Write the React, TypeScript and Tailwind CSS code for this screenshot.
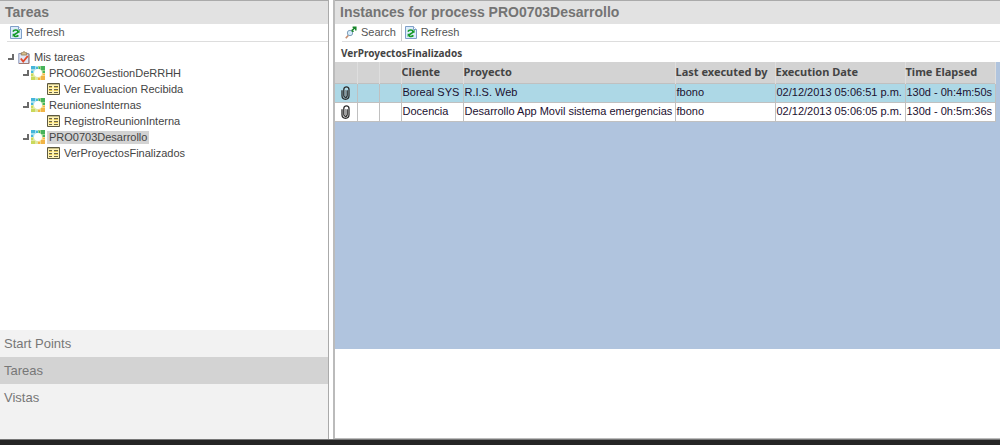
import type { ReactNode } from 'react'
import clsx from 'clsx'

interface Task {
  process: string
  view?: string
  selected?: boolean
}

const tasks: Task[] = [
  { process: 'PRO0602GestionDeRRHH', view: 'Ver Evaluacion Recibida' },
  { process: 'ReunionesInternas', view: 'RegistroReunionInterna' },
  { process: 'PRO0703Desarrollo', view: 'VerProyectosFinalizados', selected: true },
]

const instances = [
  ['Boreal SYS', 'R.I.S. Web', 'fbono', '02/12/2013 05:06:51 p.m.', '130d - 0h:4m:50s'],
  ['Docencia', 'Desarrollo App Movil sistema emergencias', 'fbono', '02/12/2013 05:06:05 p.m.', '130d - 0h:5m:36s'],
]

const columns = [
  { label: '', width: 'w-[22px]' },
  { label: '', width: 'w-[22px]' },
  { label: '', width: 'w-[22px]' },
  { label: 'Cliente', width: 'w-[62px]' },
  { label: 'Proyecto', width: 'w-[212px]' },
  { label: 'Last executed by', width: 'w-[100px]' },
  { label: 'Execution Date', width: 'w-[130px]' },
  { label: 'Time Elapsed', width: 'w-[90px]' },
]

function RefreshIcon() {
  return (
    <svg className="h-[13px] w-3 shrink-0" viewBox="0 0 12 13" fill="none">
      <path d="M.5.5h8l3 3v9H.5z" fill="#dcecfb" stroke="#7f9fc8" />
      <path d="M8.5.5v3h3" fill="#fff" stroke="#7f9fc8" />
      <path d="M3 5.6C3.8 3.6 7.8 3.4 8 5.6 8.1 7.4 4 7.8 4.1 9.6c.1 1.2 3 1.2 4.3-.2" stroke="#159a28" strokeWidth="1.7" />
      <path d="M9.6 3.6v3.2H6.8zM2.6 11V7.8h2.6z" fill="#159a28" />
    </svg>
  )
}

function SearchIcon() {
  return (
    <svg className="h-[13px] w-3 shrink-0" viewBox="0 0 12 13" fill="none">
      <path d="M.8 12.2 3.4 9.2" stroke="#c58d70" strokeWidth="1.6" />
      <circle cx="5" cy="7" r="2.7" fill="#d4ecfb" stroke="#819fba" />
      <path d="M7 4.6 9.8 1.8M7.6 1.2h3.2v3.2" stroke="#18862b" strokeWidth="1.5" />
      <path d="M7 3.8v1.6h1.8" stroke="#18862b" />
    </svg>
  )
}

function ClipboardIcon() {
  return (
    <svg className="h-[13px] w-3 shrink-0" viewBox="0 0 12 13" fill="none">
      <path d="M.8 2.5h10v10H.8z" fill="#dfe6f5" stroke="#8a94b8" />
      <path d="M11 3v9.5H1" stroke="#a1786f" />
      <path d="M3.2 4V1.8h1.3C5 .3 7 .3 7.5 1.8h1.3V4z" fill="#d9c08e" stroke="#8d7452" strokeWidth=".8" />
      <path d="m2.8 7.5 2.4 3L9.8 5" stroke="#e0492c" strokeWidth="1.9" />
    </svg>
  )
}

function ProcessIcon() {
  return (
    <svg className="size-[14px] shrink-0" viewBox="0 0 14 14">
      <path fill="#a6dfec" d="M0 0h7v7H0z" />
      <path fill="#9bd68f" d="M7 0h7v7H7z" />
      <path fill="#e0e8a0" d="M0 7h7v7H0z" />
      <path fill="#f6d987" d="M7 7h7v7H7z" />
      <path fill="#45b6da" d="M0 0h4v3H0zM5 1h2v2H5zM0 5h2v2H0z" />
      <path fill="#46b35a" d="M10 0h4v4h-4zM8 1h1v2H8zM12 5h2v2h-2z" />
      <path fill="#c9d95b" d="M0 11h4v3H0zM0 8h2v2H0z" />
      <path fill="#f1b445" d="M10 10h4v4h-4zM7 12h2v2H7zM12 8h2v1h-2z" />
      <circle cx="7" cy="7" r="4" fill="#fff" />
    </svg>
  )
}

function FormIcon() {
  return (
    <svg className="h-3 w-[13px] shrink-0" viewBox="0 0 13 12">
      <path fill="#fff3b5" stroke="#5d5940" d="M.5.5h12v11H.5z" />
      <path fill="#c9c08a" d="M1 1h11v1H1z" />
      <path fill="#6b6549" d="M2 3h3v1H2zM7 3h4v1H7zM2 6h3v1H2zM7 6h4v1H7zM2 9h3v1H2zM7 9h4v1H7z" />
      <path fill="#e4c751" d="M7 4h4v1H7zM7 7h4v1H7zM2 4h3v1H2zM2 7h3v1H2z" />
    </svg>
  )
}

function PaperclipIcon() {
  return (
    <svg className="h-[14px] w-[9px]" viewBox="0 0 9 14" fill="none">
      <path
        d="M1 4.2v5.6c0 4.6 7 4.6 7 0V3.6C8 0 2.8 0 2.8 3.6v6c0 2.4 3.4 2.4 3.4 0V4.2"
        stroke="#2b2b2b"
        strokeWidth="1.3"
      />
      <path d="M4.5 4v6" stroke="#888" strokeWidth=".8" />
    </svg>
  )
}

function Expander() {
  return (
    <svg className="size-[6px] shrink-0" viewBox="0 0 6 6">
      <path d="M4 0h2v6H0V4h4z" fill="#6b6b6b" />
    </svg>
  )
}

function PanelTitle({ children }: { children: ReactNode }) {
  return (
    <h2 className="h-6 border-t border-[#aaa] bg-[#e2e2e2] px-[5px] text-sm leading-[22px] font-bold text-[#747474]">
      {children}
    </h2>
  )
}

function ToolButton({ icon, children }: { icon: ReactNode; children: ReactNode }) {
  return (
    <button type="button" className="flex h-[17px] items-center gap-1 px-[3px] text-[11px] text-[#555]">
      {icon}
      {children}
    </button>
  )
}

function TaskTree() {
  return (
    <ul className="px-2 pt-[7px] text-[11px] leading-4 text-[#444]">
      <li>
        <div className="flex h-4 items-center gap-1">
          <Expander />
          <ClipboardIcon />
          <a href="#tareas">Mis tareas</a>
        </div>
        <ul className="pl-[15px]">
          {tasks.map((task) => (
            <li key={task.process}>
              <div className="flex h-4 items-center gap-[2px]">
                <Expander />
                <ProcessIcon />
                <a href={`#${task.process}`} className={clsx('px-[2px]', task.selected && 'bg-[#d3d3d3] leading-[13px]')}>
                  {task.process}
                </a>
              </div>
              <div className="flex h-4 items-center gap-1 pl-6">
                <FormIcon />
                <a href={`#${task.view}`}>{task.view}</a>
              </div>
            </li>
          ))}
        </ul>
      </li>
    </ul>
  )
}

function InstancesTable() {
  return (
    <table className="w-[660px] table-fixed border-collapse text-[11px]">
      <thead>
        <tr className="h-[21px] bg-[#d3d3d3] text-left font-['Noto_Sans',sans-serif] text-[#444]">
          {columns.map((col, i) => (
            <th key={i} className={clsx('border-r border-[#dedede] p-0 font-bold whitespace-nowrap', col.width)}>
              {col.label}
            </th>
          ))}
        </tr>
      </thead>
      <tbody className="text-[#1c1030]">
        {instances.map((row, i) => (
          <tr key={row[0]} className={clsx('h-[19px]', i === 0 ? 'bg-[#add8e6]' : 'bg-white')}>
            <td className="border border-l-0 border-[#c0c0c0] p-0">
              <div className="flex justify-center"><PaperclipIcon /></div>
            </td>
            <td className="border border-[#c0c0c0]" />
            <td className="border border-[#c0c0c0]" />
            {row.map((value, j) => (
              <td key={j} className="border border-[#c0c0c0] py-0 pl-px whitespace-nowrap">
                {value}
              </td>
            ))}
          </tr>
        ))}
      </tbody>
    </table>
  )
}

export default function App() {
  return (
    <div className="flex min-h-screen flex-col bg-white font-['Liberation_Sans',sans-serif]">
      <div className="flex grow gap-1">
        <aside className="flex w-[329px] shrink-0 flex-col border-r border-[#aaa]">
          <PanelTitle>Tareas</PanelTitle>
          <div className="ml-[7px] flex h-[18px] border-b border-[#ddd]">
            <ToolButton icon={<RefreshIcon />}>Refresh</ToolButton>
          </div>
          <TaskTree />
          <nav className="mt-auto flex h-[109px] flex-col bg-[#f2f2f2] text-[13px] leading-[27px] text-[#777]">
            <a href="#start" className="px-1">Start Points</a>
            <a href="#tareas" className="bg-[#d3d3d3] px-1">Tareas</a>
            <a href="#vistas" className="px-1">Vistas</a>
          </nav>
        </aside>
        <main className="min-w-0 grow border-b border-l-2 border-[#bbb]">
          <PanelTitle>Instances for process PRO0703Desarrollo</PanelTitle>
          <div className="ml-[7px] flex h-[18px] border-b border-[#ddd]">
            <ToolButton icon={<SearchIcon />}>Search</ToolButton>
            <div className="ml-[2px] border-l border-[#ccc]">
              <ToolButton icon={<RefreshIcon />}>Refresh</ToolButton>
            </div>
          </div>
          <h3 className="h-5 px-[6px] font-['Noto_Sans',sans-serif] text-[10px] leading-[22px] font-bold text-[#444]">
            VerProyectosFinalizados
          </h3>
          <div className="min-h-[287px] bg-[#b0c4de]">
            <InstancesTable />
          </div>
        </main>
      </div>
      <footer className="h-[6px] border-t border-[#777] bg-[#252525]" />
    </div>
  )
}
